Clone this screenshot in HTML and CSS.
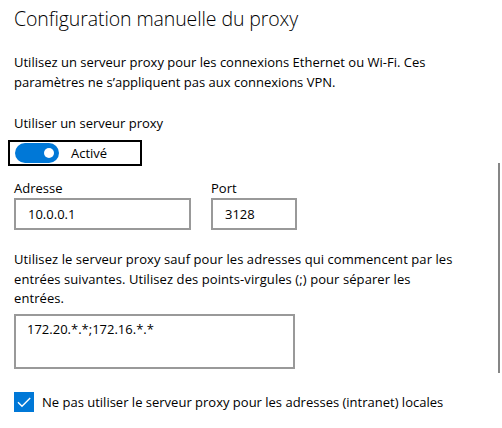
FILE: index.html
```html
<!DOCTYPE html>
<html lang="fr">
<head>
<meta charset="utf-8">
<link rel="stylesheet" href="styles.css">
</head>
<body>
<main class="page">
  <h1 class="title">Configuration manuelle du proxy</h1>
  <p class="desc">Utilisez un serveur proxy pour les connexions Ethernet ou Wi-Fi. Ces<br>paramètres ne s’appliquent pas aux connexions VPN.</p>

  <div class="label">Utiliser un serveur proxy</div>
  <div class="toggle-box">
    <span class="switch"><span class="knob"></span></span>
    <span class="toggle-text">Activé</span>
  </div>

  <div class="fields">
    <div class="field">
      <div class="field-label">Adresse</div>
      <div class="input addr">10.0.0.1</div>
    </div>
    <div class="field">
      <div class="field-label">Port</div>
      <div class="input port">3128</div>
    </div>
  </div>

  <p class="desc2">Utilisez le serveur proxy sauf pour les adresses qui commencent par les<br>entrées suivantes. Utilisez des points-virgules (;) pour séparer les<br>entrées.</p>

  <div class="textarea">172.20.*.*;172.16.*.*</div>

  <div class="check-row">
    <span class="checkbox">
      <svg width="20" height="20" viewBox="0 0 20 20"><path d="M4 10.2 L8 14.2 L16.2 6" fill="none" stroke="#fff" stroke-width="1.4"/></svg>
    </span>
    <span class="check-text">Ne pas utiliser le serveur proxy pour les adresses (intranet) locales</span>
  </div>
</main>
<div class="scrollbar"></div>
</body>
</html>
```
FILE: styles.css
```css
html, body {
  margin: 0;
  padding: 0;
  background: #fff;
}
body {
  width: 502px;
  height: 428px;
  overflow: hidden;
  position: relative;
}
.page {
  padding: 5px 0 0 14px;
  font-family: "Open Sans", "Noto Sans", sans-serif;
  font-size: 13px;
  line-height: 20px;
  color: #000;
}
.title {
  margin: 0;
  font-size: 19.5px;
  font-weight: 300;
  line-height: 28px;
  letter-spacing: -0.1px;
  color: #000;
}
.desc {
  margin: 19px 0 0 0;
  white-space: nowrap;
}
.label {
  margin-top: 21px;
}
.toggle-box {
  margin: 0 0 0 -6px;
  margin-top: 7px;
  width: 125px;
  height: 22px;
  border: 2px solid #000;
  display: flex;
  align-items: center;
  padding-left: 5px;
  gap: 12px;
}
.switch {
  width: 44px;
  height: 20px;
  border-radius: 10px;
  background: #0078d7;
  display: flex;
  align-items: center;
  justify-content: flex-end;
  padding-right: 5px;
  box-sizing: border-box;
}
.knob {
  width: 10px;
  height: 10px;
  border-radius: 50%;
  background: #fff;
}
.toggle-text {
  font-size: 13px;
}
.fields {
  display: flex;
  gap: 20px;
  margin-top: 12px;
}
.field-label {
  line-height: 20px;
}
.input {
  height: 28px;
  border: 2px solid #999;
  padding-left: 12px;
  line-height: 28px;
  box-sizing: content-box;
}
.addr { width: 161px; }
.port { width: 70px; }
.desc2 {
  margin: 20px 0 0 0;
  line-height: 19.5px;
  letter-spacing: 0.08px;
  white-space: nowrap;
}
.textarea {
  margin-top: 5px;
  width: 266px;
  height: 51px;
  border: 2px solid #999;
  padding-left: 11px;
  line-height: 26px;
}
.check-row {
  display: flex;
  align-items: center;
  gap: 8px;
  margin-top: 23px;
}
.checkbox {
  width: 20px;
  height: 20px;
  background: #0078d7;
  display: block;
}
.checkbox svg { display: block; }
.scrollbar {
  position: absolute;
  left: 498px;
  top: 163px;
  width: 2px;
  height: 210px;
  background: #868686;
}
```
